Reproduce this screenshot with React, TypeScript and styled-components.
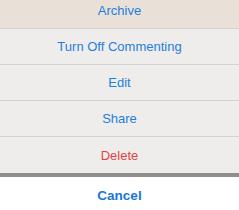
import React from 'react';
import styled, { createGlobalStyle } from 'styled-components';

const GlobalStyle = createGlobalStyle`
  html, body {
    margin: 0;
    padding: 0;
    background: #ffffff;
    overflow: hidden;
  }
`;

type Tone = 'blue' | 'red';

const Screen = styled.div`
  width: 239px;
  height: 210px;
  overflow: hidden;
  background: #8e8e8e;
  font-family: 'Liberation Sans', Arial, sans-serif;
`;

const Group = styled.div`
  display: flex;
  flex-direction: column;
  margin-top: -7px;
`;

const Item = styled.div<{ $warm?: boolean }>`
  height: 35px;
  display: flex;
  align-items: center;
  justify-content: center;
  background: ${(p) => (p.$warm ? '#e9e0d7' : '#efedeb')};
  border-bottom: 1px solid #d3d1cf;

  &:last-child {
    border-bottom: none;
    height: 36px;
  }
`;

const Label = styled.span<{ $tone: Tone }>`
  font-size: 13px;
  color: ${(p) => (p.$tone === 'red' ? '#e2453f' : '#1f7fdc')};
`;

const Gap = styled.div`
  height: 4px;
  background: #8e8e8e;
`;

const CancelRow = styled.div`
  height: 36px;
  display: flex;
  align-items: center;
  justify-content: center;
  background: #ffffff;
`;

const CancelLabel = styled.span`
  font-size: 13.5px;
  font-weight: bold;
  color: #1877d6;
`;

const actions: { label: string; tone: Tone; warm?: boolean }[] = [
  { label: 'Archive', tone: 'blue', warm: true },
  { label: 'Turn Off Commenting', tone: 'blue' },
  { label: 'Edit', tone: 'blue' },
  { label: 'Share', tone: 'blue' },
  { label: 'Delete', tone: 'red' },
];

export default function App() {
  return (
    <>
      <GlobalStyle />
      <Screen>
        <Group>
          {actions.map((a) => (
            <Item key={a.label} $warm={a.warm}>
              <Label $tone={a.tone}>{a.label}</Label>
            </Item>
          ))}
        </Group>
        <Gap />
        <CancelRow>
          <CancelLabel>Cancel</CancelLabel>
        </CancelRow>
      </Screen>
    </>
  );
}
